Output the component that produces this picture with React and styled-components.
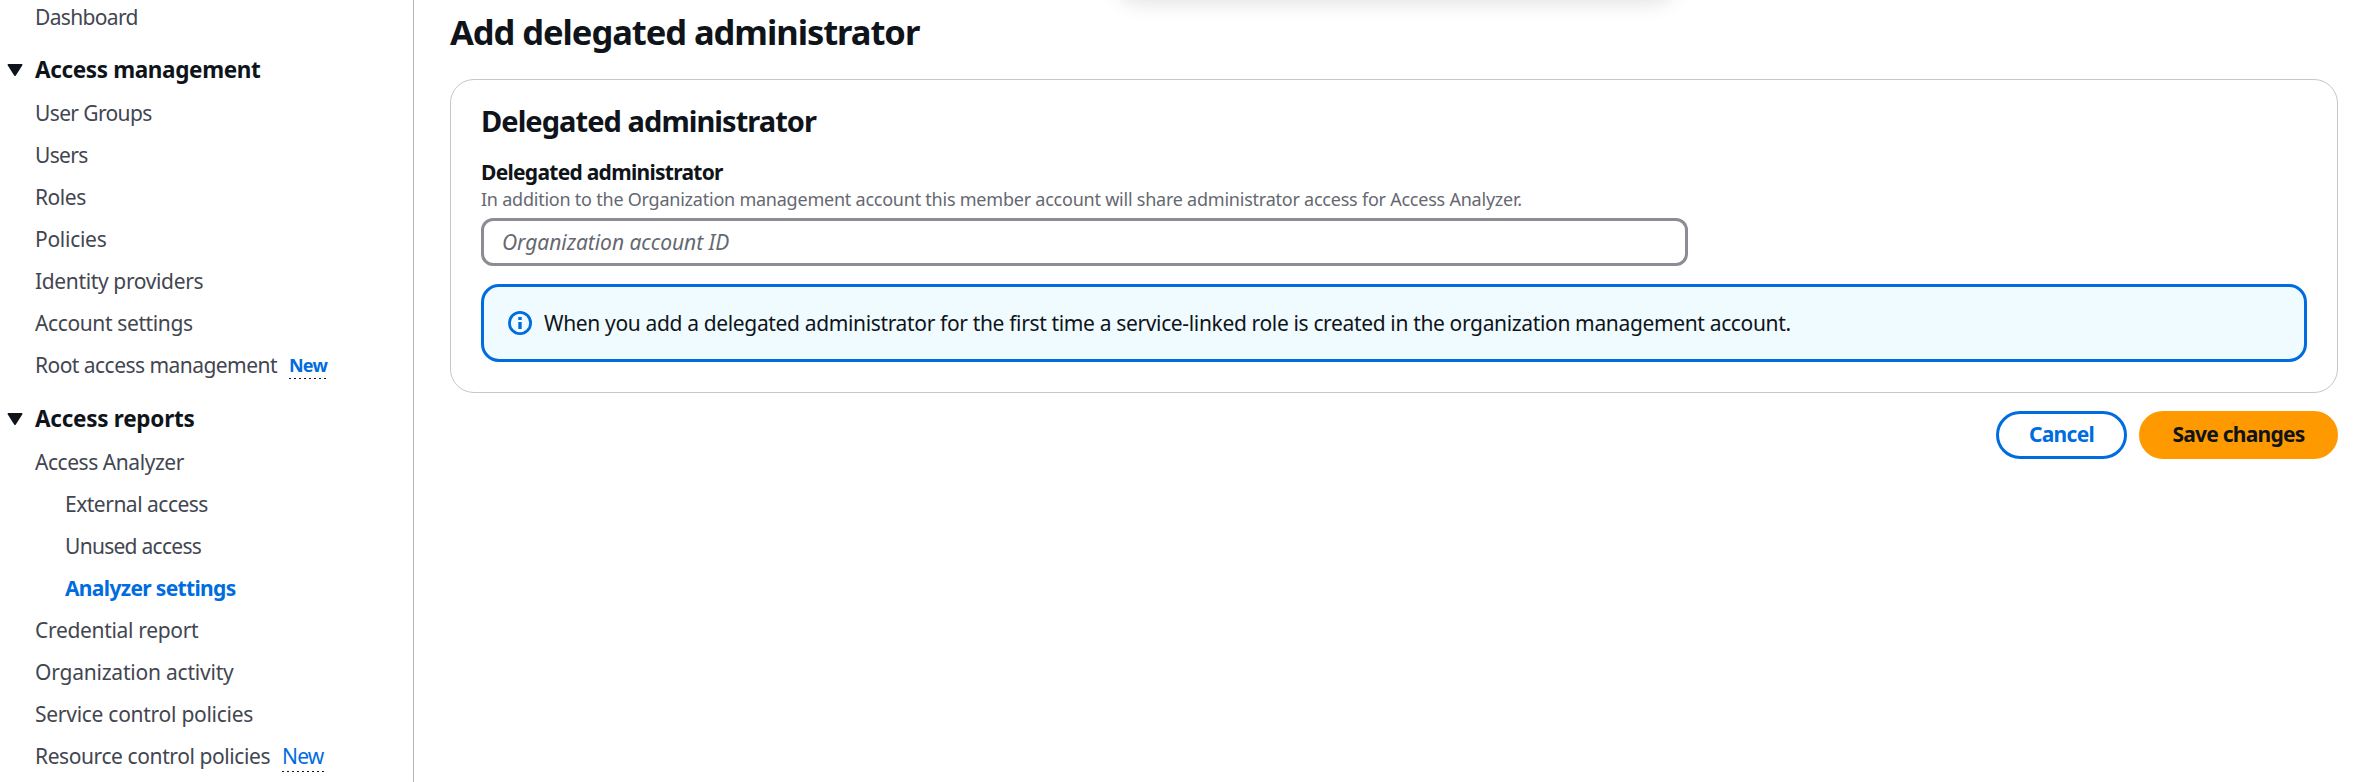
import React from "react";
import styled, { createGlobalStyle } from "styled-components";

const GlobalStyle = createGlobalStyle`
  * { box-sizing: border-box; }
  body {
    margin: 0;
    background: #fff;
    color: #0f141a;
    font-family: "Noto Sans", "Open Sans", sans-serif;
    font-size: 21px;
    line-height: 30px;
    overflow: hidden;
  }
`;

const Shell = styled.div`
  display: flex;
  height: 782px;
  overflow: hidden;
`;

const Sidebar = styled.nav`
  flex: 0 0 414px;
  height: 782px;
  border-right: 1px solid #b4b4bb;
  overflow: hidden;
  padding-top: 2px;
`;

const Item = styled.a`
  display: flex;
  align-items: center;
  height: 30px;
  margin-bottom: 12px;
  padding-left: ${(p) => (p.$nested ? 65 : 35)}px;
  color: ${(p) => (p.$active ? "#006ce0" : "#424650")};
  font-weight: ${(p) => (p.$active ? 700 : 400)};
  white-space: nowrap;
`;

const Label = styled.span`
  letter-spacing: ${(p) => p.$track || 0}px;
  white-space: nowrap;
`;

const Section = styled.div`
  display: flex;
  align-items: center;
  height: 30px;
  margin: ${(p) => p.$gap}px 0 13px;
  padding-left: 7px;
  gap: 12px;
  font-size: 22.5px;
  font-weight: 700;
`;

const NewTag = styled.span`
  height: ${(p) => (p.$small ? 28 : 32)}px;
  margin-left: 12px;
  color: #006ce0;
  font-size: ${(p) => (p.$small ? 18 : 21)}px;
  font-weight: ${(p) => (p.$small ? 700 : 400)};
  line-height: ${(p) => (p.$small ? 28 : 32)}px;
  letter-spacing: -0.8px;
  background: repeating-linear-gradient(90deg, #0f141a 0 2px, transparent 2px 5px) left bottom / 100% 1px no-repeat;
`;

const Main = styled.main`
  position: relative;
  flex: 1;
  padding: 9px 24px 0 36px;
`;

const FloatingShadow = styled.div`
  position: absolute;
  top: -60px;
  left: 702px;
  width: 560px;
  height: 58px;
  border-radius: 24px;
  box-shadow: 0 4px 20px 1px rgba(0, 7, 22, 0.12);
`;

const Title = styled.h1`
  margin: 0 0 25px;
  font-size: 34.5px;
  line-height: 45px;
  font-weight: 700;
`;

const Card = styled.section`
  height: 314px;
  padding: 23px 30px 30px;
  border: 1px solid #c6c6cd;
  border-radius: 24px;
`;

const CardTitle = styled.h2`
  margin: 0 0 18px;
  font-size: 29px;
  line-height: 36px;
  font-weight: 700;
`;

const FieldLabel = styled.label`
  display: block;
  font-weight: 700;
`;

const Hint = styled.div`
  color: #656871;
  font-size: 18px;
  line-height: 24px;
`;

const Field = styled.div`
  display: flex;
  align-items: center;
  width: 1207px;
  height: 48px;
  margin: 7px 0 18px;
  padding: 0 18px 1px;
  border: 3px solid #8c8c94;
  border-radius: 12px;
  color: #656871;
  font-style: italic;
`;

const Alert = styled.div`
  display: flex;
  align-items: center;
  gap: 12px;
  height: 78px;
  padding: 0 24px;
  border: 3px solid #006ce0;
  border-radius: 18px;
  background: #f0fbff;
`;

const AlertText = styled(Label)`
  padding-bottom: 1px;
`;

const Actions = styled.div`
  display: flex;
  justify-content: flex-end;
  gap: 12px;
  margin-top: 18px;
`;

const Button = styled.button`
  display: flex;
  align-items: center;
  justify-content: center;
  width: ${(p) => (p.$primary ? 199 : 131)}px;
  height: 48px;
  padding: 0 0 2px;
  border: 3px solid ${(p) => (p.$primary ? "#ff9900" : "#006ce0")};
  border-radius: 24px;
  background: ${(p) => (p.$primary ? "#ff9900" : "#fff")};
  color: ${(p) => (p.$primary ? "#0f141a" : "#006ce0")};
  font: 700 21px/30px "Noto Sans", "Open Sans", sans-serif;
`;

const Caret = () => (
  <svg width="16" height="16" viewBox="0 0 16 16">
    <path d="M1.3 2.8h13.4L8 13.2z" fill="#0f141a" stroke="#0f141a" strokeWidth="1.6" strokeLinejoin="round" />
  </svg>
);

const InfoIcon = () => (
  <svg width="24" height="24" viewBox="0 0 24 24">
    <circle cx="12" cy="12" r="10.6" fill="none" stroke="#006ce0" strokeWidth="2.8" />
    <path d="M10.3 6h3.4v3h-3.4zM10.3 11h3.4v7h-3.4z" fill="#006ce0" />
  </svg>
);

const management = [
  { text: "User Groups", track: -0.63 },
  { text: "Users", track: -0.7 },
  { text: "Roles", track: -0.45 },
  { text: "Policies", track: -0.28 },
  { text: "Identity providers", track: -0.36 },
  { text: "Account settings", track: -0.38 },
];

const reports = [
  { text: "Access Analyzer", track: -0.45 },
  { text: "External access", track: -0.5, nested: true },
  { text: "Unused access", track: -0.72, nested: true },
  { text: "Analyzer settings", track: -0.66, nested: true, active: true },
  { text: "Credential report", track: -0.32 },
  { text: "Organization activity", track: -0.21 },
  { text: "Service control policies", track: -0.27 },
];

const NavItem = ({ text, track, nested, active, children }) => (
  <Item $nested={nested} $active={active}>
    <Label $track={track}>{text}</Label>
    {children}
  </Item>
);

export default function App() {
  return (
    <>
      <GlobalStyle />
      <Shell>
        <Sidebar>
          <NavItem text="Dashboard" track={-0.65} />
          <Section $gap={23}><Caret /><Label $track={-0.36}>Access management</Label></Section>
          {management.map((item) => <NavItem key={item.text} {...item} />)}
          <NavItem text="Root access management" track={-0.54}><NewTag $small>New</NewTag></NavItem>
          <Section $gap={24}><Caret /><Label $track={-0.26}>Access reports</Label></Section>
          {reports.map((item) => <NavItem key={item.text} {...item} />)}
          <NavItem text="Resource control policies" track={-0.41}><NewTag>New</NewTag></NavItem>
        </Sidebar>
        <Main>
          <FloatingShadow />
          <Title><Label $track={-1.04}>Add delegated administrator</Label></Title>
          <Card>
            <CardTitle><Label $track={-0.94}>Delegated administrator</Label></CardTitle>
            <FieldLabel><Label $track={-0.72}>Delegated administrator</Label></FieldLabel>
            <Hint><Label $track={-0.231}>In addition to the Organization management account this member account will share administrator access for Access Analyzer.</Label></Hint>
            <Field><Label $track={-0.05}>Organization account ID</Label></Field>
            <Alert>
              <InfoIcon />
              <AlertText $track={-0.35}>When you add a delegated administrator for the first time a service-linked role is created in the organization management account.</AlertText>
            </Alert>
          </Card>
          <Actions>
            <Button><Label $track={-0.7}>Cancel</Label></Button>
            <Button $primary><Label $track={-0.75}>Save changes</Label></Button>
          </Actions>
        </Main>
      </Shell>
    </>
  );
}
